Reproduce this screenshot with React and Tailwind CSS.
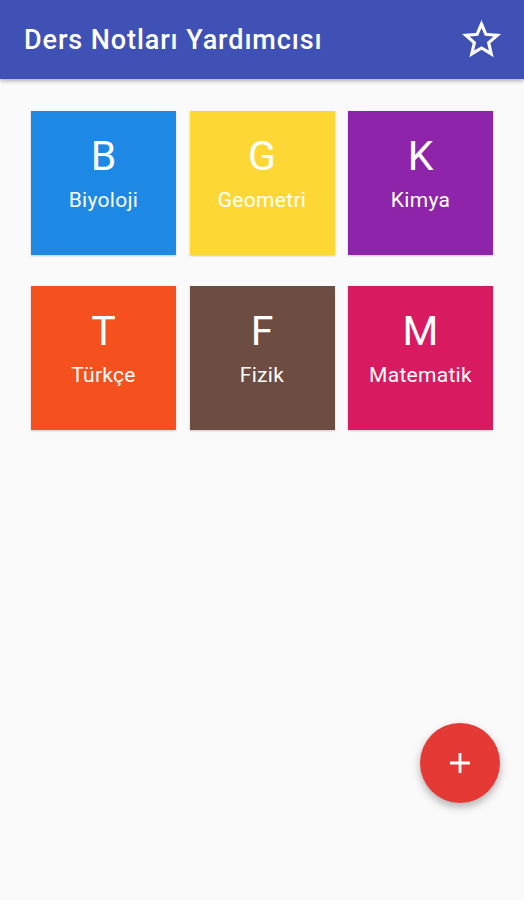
const subjects = [
  { letter: 'B', name: 'Biyoloji', color: 'bg-[#1e88e5]' },
  { letter: 'G', name: 'Geometri', color: 'bg-[#fdd835]' },
  { letter: 'K', name: 'Kimya', color: 'bg-[#8e24aa]' },
  { letter: 'T', name: 'Türkçe', color: 'bg-[#f4511e]' },
  { letter: 'F', name: 'Fizik', color: 'bg-[#6d4c41]' },
  { letter: 'M', name: 'Matematik', color: 'bg-[#d81b60]' },
];

function StarBorder() {
  return (
    <svg width="47" height="47" viewBox="0 0 24 24" fill="white">
      <path d="M22 9.24l-7.19-.62L12 2 9.19 8.63 2 9.24l5.46 4.73L5.82 21 12 17.27 18.18 21l-1.63-7.03L22 9.24zM12 15.4l-3.76 2.27 1-4.28-3.32-2.88 4.38-.38L12 6.1l1.71 4.04 4.38.38-3.32 2.88 1 4.28L12 15.4z" />
    </svg>
  );
}

export default function App() {
  return (
    <div className="relative w-[524px] h-[900px] bg-[#fafafa] overflow-hidden font-['Roboto',sans-serif]">
      {/* App bar */}
      <header className="h-[79px] bg-[#3f51b5] flex items-center justify-between pl-[24px] pr-[19px] shadow-[0_2px_4px_rgba(0,0,0,0.3)]">
        <h1 className="text-white text-[27px] font-medium tracking-[0.9px] mt-[2px]">Ders Notları Yardımcısı</h1>
        <StarBorder />
      </header>

      {/* Subjects */}
      <div className="grid grid-cols-[145px_145px_145px] gap-x-[13.5px] gap-y-[31px] pl-[31px] pt-[32px]">
        {subjects.map((s) => (
          <div
            key={s.letter}
            className={`${s.color} h-[144px] flex flex-col items-center pt-[21px] text-white shadow-[0_1px_2px_rgba(0,0,0,0.2)]`}
          >
            <div className="text-[41px] leading-[48px]">{s.letter}</div>
            <div className="text-[21px] leading-[24px] mt-[8px] tracking-[0.3px]">{s.name}</div>
          </div>
        ))}
      </div>

      {/* FAB */}
      <button className="absolute left-[420px] top-[723px] w-[80px] h-[80px] rounded-full bg-[#e53935] flex items-center justify-center shadow-[0_4px_8px_rgba(0,0,0,0.3)]">
        <svg width="22" height="22" viewBox="0 0 22 22">
          <path d="M11 1v20M1 11h20" stroke="white" strokeWidth="2.8" />
        </svg>
      </button>
    </div>
  );
}
